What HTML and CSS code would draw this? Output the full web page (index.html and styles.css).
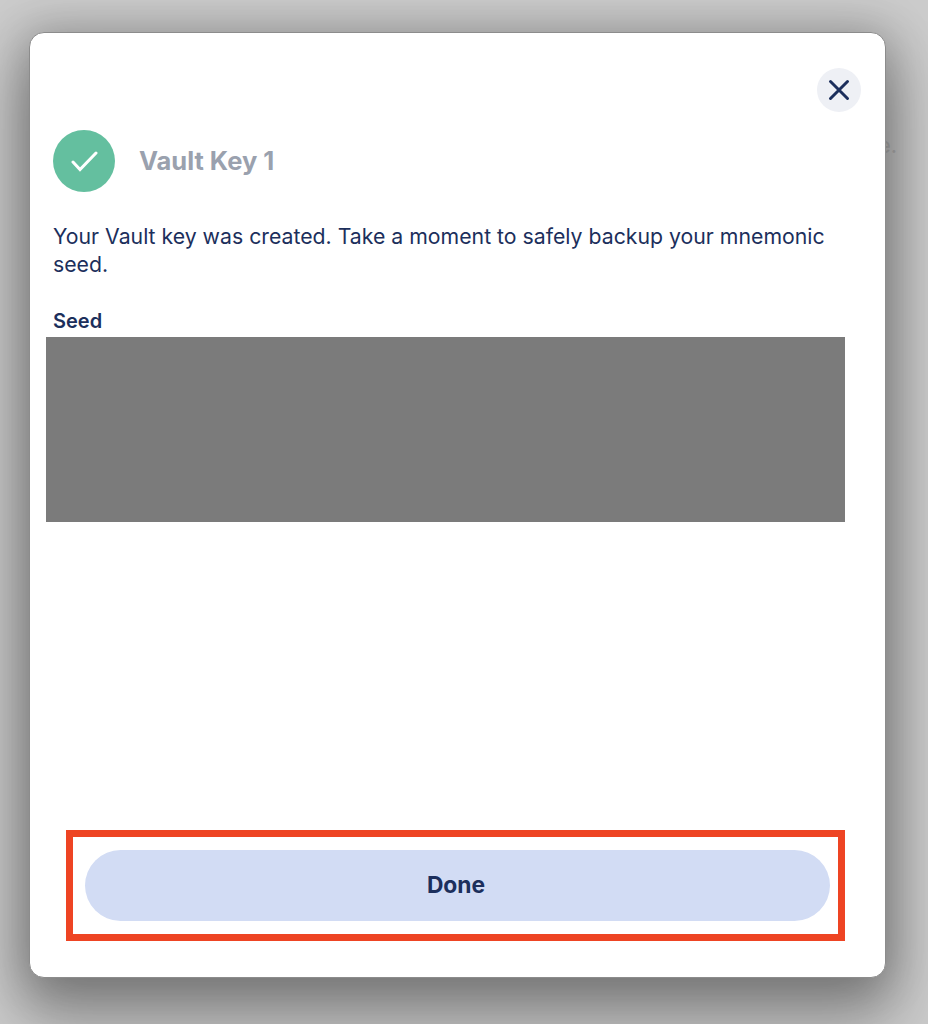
FILE: index.html
```html
<!DOCTYPE html>
<html lang="en">
<head>
    <meta charset="UTF-8">
    <meta name="viewport" content="width=device-width, initial-scale=1.0">
    <title>Vault Key 1</title>
    <link rel="stylesheet" href="styles.css">
</head>
<body>

    <div class="backdrop-text">e.</div>

    <div class="modal">
        <div class="modal-top">
            <button type="button" class="close-button" aria-label="Close">
                <svg width="22" height="22" viewBox="0 0 22 22" fill="none" stroke="#1c2f5c" stroke-width="3" stroke-linecap="round">
                    <path d="M2.5 2.5 L19.5 19.5 M19.5 2.5 L2.5 19.5"/>
                </svg>
            </button>
        </div>

        <div class="key-header">
            <div class="check-circle">
                <svg width="28" height="22" viewBox="0 0 28 22" fill="none" stroke="#fff" stroke-width="3" stroke-linecap="round" stroke-linejoin="miter">
                    <path d="M3 12 L10 19.5 L26 3"/>
                </svg>
            </div>
            <h2 class="key-title">Vault Key 1</h2>
        </div>

        <p class="message">Your Vault key was created. Take a moment to safely backup your mnemonic seed.</p>

        <div class="seed-label">Seed</div>
        <div class="seed-box"></div>

        <div class="done-outline">
            <button type="button" class="done-button">Done</button>
        </div>
    </div>

</body>
</html>
```

FILE: styles.css
```css
* {
    box-sizing: border-box;
}
html, body {
    height: 100%;
}
body {
    margin: 0;
    padding: 32px 43px 0 29px;
    height: 1024px;
    overflow: hidden;
    background-color: #cbcbcb;
    font-family: Inter, "Liberation Sans", sans-serif;
    color: #1c2f5c;
}
.backdrop-text {
    position: absolute;
    left: 878px;
    top: 132px;
    font-size: 22px;
    color: #b4b4b4;
}
.modal {
    position: relative;
    display: flex;
    flex-direction: column;
    width: 857px;
    height: 946px;
    padding: 0 24px 0 23px;
    background-color: #fff;
    border: 1px solid #8c8c8c;
    border-radius: 15px;
    box-shadow: 0 0 44px 6px rgba(0, 0, 0, 0.2), 0 34px 60px 8px rgba(0, 0, 0, 0.32);
}
.modal-top {
    display: flex;
    justify-content: flex-end;
    height: 97px;
    padding-top: 35px;
}
.close-button {
    display: flex;
    align-items: center;
    justify-content: center;
    width: 44px;
    height: 44px;
    padding: 0;
    border: none;
    border-radius: 50%;
    background-color: #eef0f5;
}
.key-header {
    display: flex;
    align-items: center;
    gap: 24px;
}
.check-circle {
    display: flex;
    align-items: center;
    justify-content: center;
    width: 62px;
    height: 62px;
    border-radius: 50%;
    background-color: #64bf9f;
}
.key-title {
    margin: 0 0 2px;
    font-size: 25.5px;
    font-weight: 700;
    color: #9aa1ae;
}
.message {
    margin: 30px 0 0;
    font-size: 21.25px;
    line-height: 28px;
}
.seed-label {
    margin-top: 31px;
    font-size: 20px;
    line-height: 24px;
    font-weight: 600;
}
.seed-box {
    width: 799px;
    height: 185px;
    margin-left: -7px;
    margin-top: 4px;
    background-color: #7b7b7b;
}
.done-outline {
    width: 779px;
    height: 111px;
    margin-top: 308px;
    margin-left: 13px;
    padding: 13px 8px 13px 12px;
    border: 7px solid #ee4423;
}
.done-button {
    display: block;
    width: 100%;
    height: 71px;
    padding: 0 3px 2px 0;
    border: none;
    border-radius: 36px;
    background-color: #d2dcf4;
    color: #1c2f5c;
    font-family: inherit;
    font-size: 22.8px;
    font-weight: 700;
}
```
